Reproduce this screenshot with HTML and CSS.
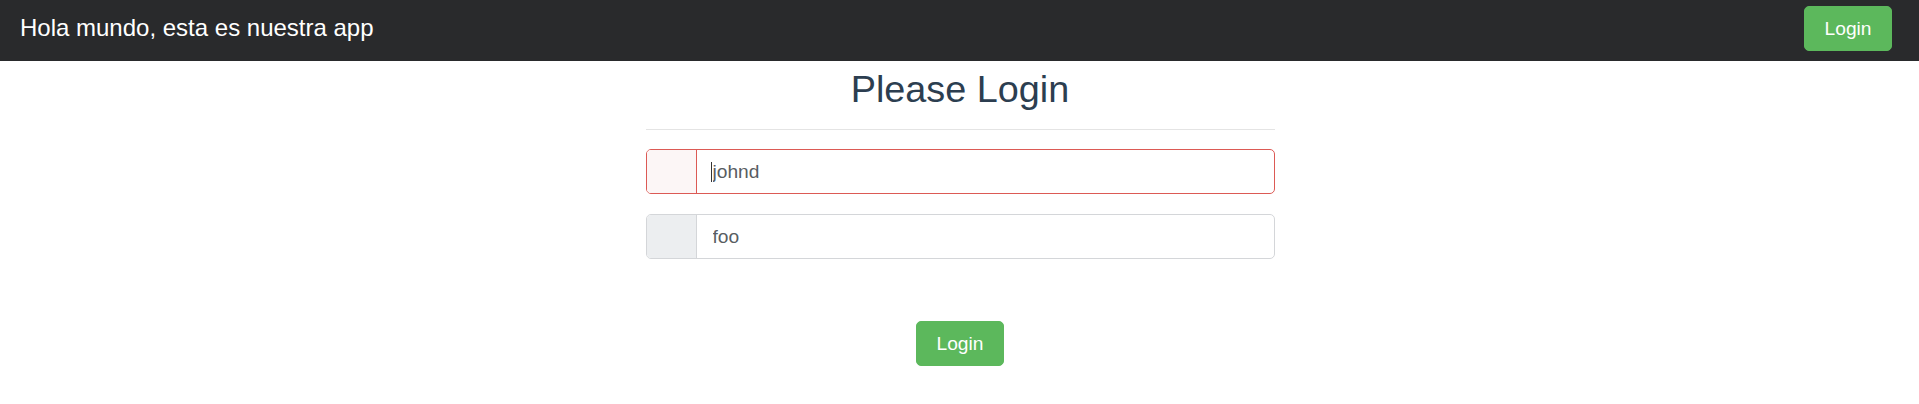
FILE: index.html
```html
<!DOCTYPE html>
<html lang="es">
<head>
<meta charset="utf-8">
<title>Hola mundo</title>
<link rel="stylesheet" href="styles.css">
</head>
<body>
<nav class="navbar">
  <span class="brand">Hola mundo, esta es nuestra app</span>
  <button class="btn btn-success">Login</button>
</nav>
<main class="app">
  <h1 class="title">Please Login</h1>
  <hr class="divider">
  <div class="form">
    <div class="input-group invalid">
      <span class="prepend"></span>
      <div class="field">
        <span class="caret"></span>
        <input class="control" type="text" value="johnd">
      </div>
    </div>
    <div class="input-group">
      <span class="prepend"></span>
      <div class="field">
        <input class="control" type="text" value="foo">
      </div>
    </div>
  </div>
  <div class="actions">
    <button class="btn btn-success">Login</button>
  </div>
</main>
</body>
</html>
```

FILE: styles.css
```css
* { box-sizing: border-box; }

html, body {
  margin: 0;
  padding: 0;
  background: #ffffff;
  font-family: "Liberation Sans", Arial, sans-serif;
}

.navbar {
  height: 61px;
  background: #292a2c;
  display: flex;
  align-items: center;
  justify-content: space-between;
  padding: 0 27px 5px 20px;
}

.brand {
  color: #ffffff;
  font-size: 24px;
  line-height: 36px;
}

.btn {
  font-family: "Liberation Sans", Arial, sans-serif;
  font-size: 19.2px;
  height: 45px;
  line-height: 43px;
  padding: 0 19.5px;
  border: 1px solid transparent;
  border-radius: 5px;
  cursor: pointer;
}

.btn-success {
  background: #5cb85c;
  border-color: #5cb85c;
  color: #ffffff;
}

.app {
  color: #2c3e50;
  text-align: center;
  width: 629px;
  margin: 0 auto;
  padding-top: 6px;
  position: relative;
  left: 0.5px;
}

.title {
  font-size: 37.8px;
  font-weight: 400;
  line-height: 45px;
  margin: 0;
}

.divider {
  margin: 17px 0 0;
  border: 0;
  border-top: 1px solid #e4e4e4;
}

.form {
  display: flex;
  flex-direction: column;
  gap: 20px;
  padding-top: 19px;
}

.input-group {
  display: flex;
  height: 45px;
  border: 1px solid #d4d6d9;
  border-radius: 5px;
  overflow: hidden;
}

.prepend {
  width: 50px;
  flex: none;
  background: #eceef0;
  border-right: 1px solid #d4d6d9;
}

.field {
  flex: 1;
  position: relative;
  display: flex;
}

.control {
  flex: 1;
  border: 0;
  outline: none;
  background: transparent;
  font-family: "Liberation Sans", Arial, sans-serif;
  font-size: 19.2px;
  color: #585d62;
  padding: 0 14px 0 16px;
  height: 43px;
}

.invalid {
  border-color: #dc5a55;
}

.invalid .prepend {
  background: #fcf6f6;
  border-right-color: #dc5a55;
}

.caret {
  position: absolute;
  left: 14px;
  top: 12px;
  width: 1px;
  height: 20px;
  background: #333;
}

.actions {
  padding-top: 62px;
  display: flex;
  justify-content: center;
}
```
